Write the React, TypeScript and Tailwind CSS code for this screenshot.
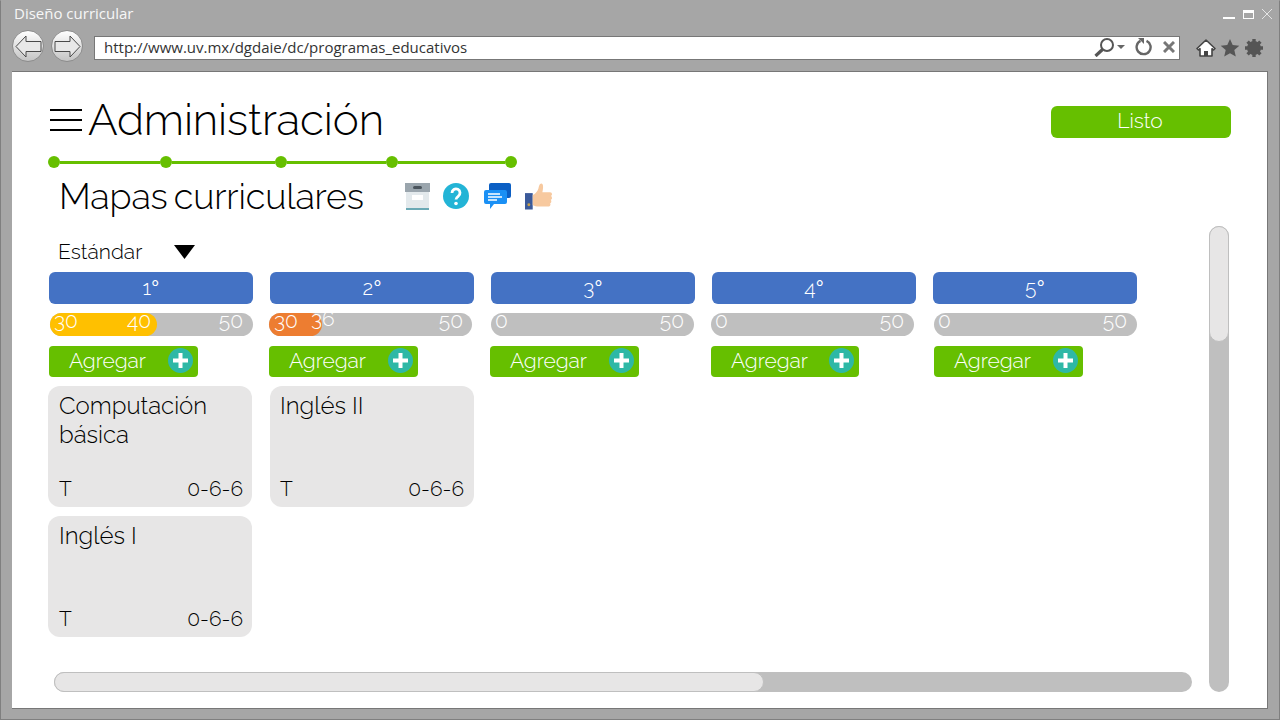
import React from 'react'

const NavArrow = ({ flip }: { flip?: boolean }) => (
  <div className="flex h-8 w-8 items-center justify-center rounded-full border border-[#8c8c8c] bg-gradient-to-b from-white to-[#c4c4c4]">
    <svg width="27" height="23" viewBox="0 0 27 23" className={flip ? 'rotate-180' : ''}>
      <path d="M1 11.500 11 1V6.500H26V16.500H11V22Z" fill="#e8e8e8" stroke="#4a4a4a" strokeWidth="1" />
    </svg>
  </div>
)

const Plus = () => (
  <div className="flex h-[25px] w-[25px] items-center justify-center rounded-full bg-[#2eb8a6]">
    <svg width="15" height="15" viewBox="0 0 15 15">
      <path d="M5.500 0h4v5.500H15v4H9.500V15h-4V9.500H0v-4h5.500z" fill="#fff" />
    </svg>
  </div>
)

type Semester = {
  num: string
  bar: string
  add: string
  addW: string
  card: string
  pad: string
  fill?: string
  labels: { text: string; cls: string }[]
  courses: string[][]
}

const semesters: Semester[] = [
  {
    num: '1',
    bar: 'ml-px',
    add: 'ml-0',
    addW: 'w-[149px]',
    card: '-ml-px',
    pad: 'pl-[11px] pr-[9px]',
    fill: 'w-[107px] bg-[#ffc000]',
    labels: [
      { text: '30', cls: 'left-[4px] top-[-4px]' },
      { text: '40', cls: 'left-[77px] top-[-4px]' },
      { text: '50', cls: 'right-[10px] top-[-4px]' },
    ],
    courses: [['Computación', 'básica'], ['Inglés I']],
  },
  {
    num: '2',
    bar: '-ml-px',
    add: '-ml-px',
    addW: 'w-[149px]',
    card: 'ml-0',
    pad: 'px-[10px]',
    fill: 'w-[53px] bg-[#ed7d31]',
    labels: [
      { text: '30', cls: 'left-[5px] top-[-4px]' },
      { text: '36', cls: 'left-[42px] top-[-6px]' },
      { text: '50', cls: 'right-[9px] top-[-4px]' },
    ],
    courses: [['Inglés II']],
  },
  {
    num: '3',
    bar: 'ml-0',
    add: '-ml-px',
    addW: 'w-[149px]',
    card: 'ml-0',
    pad: 'px-[10px]',
    labels: [
      { text: '0', cls: 'left-[4px] top-[-4px]' },
      { text: '50', cls: 'right-[10px] top-[-4px]' },
    ],
    courses: [],
  },
  {
    num: '4',
    bar: '-ml-px',
    add: '-ml-px',
    addW: 'w-[148px]',
    card: 'ml-0',
    pad: 'px-[10px]',
    labels: [
      { text: '0', cls: 'left-[4px] top-[-4px]' },
      { text: '50', cls: 'right-[10px] top-[-4px]' },
    ],
    courses: [],
  },
  {
    num: '5',
    bar: 'ml-px',
    add: 'ml-px',
    addW: 'w-[149px]',
    card: 'ml-0',
    pad: 'px-[10px]',
    labels: [
      { text: '0', cls: 'left-[4px] top-[-4px]' },
      { text: '50', cls: 'right-[10px] top-[-4px]' },
    ],
    courses: [],
  },
]

const Column = ({ s }: { s: Semester }) => (
  <div className="flex w-[204px] shrink-0 flex-col">
    <div className="flex h-8 w-[204px] items-center justify-center rounded-md bg-[#4472c4] text-[21px] text-white">
      {s.num}
      <span className="font-['Liberation_Sans',sans-serif] font-normal">°</span>
    </div>
    <div className={`relative mt-[9px] h-[23px] w-[203px] rounded-full bg-[#bfbfbf] text-[21px] text-white ${s.bar}`}>
      {s.fill && <div className={`absolute inset-y-0 left-0 rounded-full ${s.fill}`} />}
      {s.labels.map((l) => (
        <span key={l.text} className={`absolute leading-6 ${l.cls}`}>{l.text}</span>
      ))}
    </div>
    <div className={`mt-[10px] flex h-[31px] items-center justify-between rounded-[4px] bg-[#66bf00] pb-[2px] pl-5 pr-[5px] text-[21px] text-white ${s.addW} ${s.add}`}>
      <span>Agregar</span>
      <Plus />
    </div>
    <div className={`mt-[9px] flex flex-col gap-[9px] ${s.card}`}>
      {s.courses.map((c) => (
        <div key={c[0]} className={`flex h-[121px] w-[204px] flex-col rounded-xl bg-[#e7e6e6] pb-[3px] pt-[5px] text-black ${s.pad}`}>
          <div className="text-2xl leading-[29px]">
            {c.map((n) => <div key={n}>{n}</div>)}
          </div>
          <div className="mt-auto flex justify-between text-[21px]">
            <span>T</span>
            <span>0-6-6</span>
          </div>
        </div>
      ))}
    </div>
  </div>
)

export default function App() {
  return (
    <div className="flex h-[720px] w-[1280px] flex-col overflow-hidden border border-[#7f7f7f] border-t-[#a6a6a6] bg-[#a6a6a6] font-['Raleway','Lato',sans-serif] font-light oldstyle-nums">
      {/* browser chrome */}
      <div className="flex h-[26px] shrink-0 items-center justify-between pb-[2px] pl-[13px] pr-[7px] font-['Open_Sans',sans-serif] text-[15px] font-normal text-[#f7f7f7]">
        <span>Diseño curricular</span>
        <div className="mt-[2px] flex items-center gap-2">
          <div className="mt-[7px] h-[2px] w-3 bg-white" />
          <div className="h-[9px] w-[11px] border border-t-[3px] border-white" />
          <svg width="10" height="10" viewBox="0 0 10 10"><path d="M0 0l10 10M10 0 0 10" stroke="#e4e4e4" /></svg>
        </div>
      </div>
      <div className="flex h-[38px] shrink-0 items-center pl-[11px]">
        <NavArrow />
        <div className="ml-[7px]"><NavArrow flip /></div>
        <div className="ml-[11px] mt-[3px] flex h-6 w-[1086px] items-center justify-between border border-[#777] bg-white pb-px pl-[9px] pr-[4px] font-['Open_Sans',sans-serif] text-[15px] font-normal text-[#333]">
          <span>http://www.uv.mx/dgdaie/dc/programas_educativos</span>
          <div className="flex items-center gap-[10px]">
            <svg width="31" height="19" viewBox="0 0 31 19">
              <circle cx="13" cy="7" r="6" fill="none" stroke="#555" strokeWidth="2" />
              <path d="M8.500 11.500 1.500 18" stroke="#555" strokeWidth="3.200" />
              <path d="M23 7h8l-4 4z" fill="#666" />
            </svg>
            <svg width="18" height="18" viewBox="0 0 18 18">
              <path d="M11.500 2.800A7 7 0 1 1 5.500 2.900" fill="none" stroke="#666" strokeWidth="2.400" />
              <path d="M3 0h6v6z" fill="#666" />
            </svg>
            <svg width="12" height="12" viewBox="0 0 12 12"><path d="M1 1l10 10M11 1 1 11" stroke="#777" strokeWidth="3" /></svg>
          </div>
        </div>
        <div className="ml-[16px] mt-[3px] flex items-center gap-[4px]">
          <svg width="20" height="20" viewBox="0 0 20 20">
            <path d="M10 2 1 10.500l1.500 1.500L4 10.700V18h12v-7.300l1.500 1.300 1.500-1.500z" fill="#fff" stroke="#444" strokeWidth="1.600" strokeLinejoin="round" />
            <path d="M8 18v-5h4v5z" fill="#444" />
          </svg>
          <svg width="20" height="20" viewBox="0 0 20 20">
            <path d="M10 1l2.700 6.100 6.600.6-5 4.400 1.500 6.500L10 15.200l-5.800 3.400 1.500-6.500-5-4.400 6.600-.6z" fill="#555" />
          </svg>
          <svg width="20" height="20" viewBox="0 0 20 20">
            <circle cx="10" cy="10" r="5" fill="none" stroke="#555" strokeWidth="4" />
            <path d="M10 1v18M1 10h18M3.600 3.600l12.800 12.800M16.400 3.600 3.600 16.400" stroke="#555" strokeWidth="3.400" />
          </svg>
        </div>
      </div>

      {/* page */}
      <div className="mb-[10px] ml-[11px] mr-[11px] mt-[6px] flex min-h-0 flex-1 flex-col border-b border-r border-t border-[#777] bg-white">
        <div className="flex shrink-0 items-start justify-between pl-[38px] pr-[36px] pt-[21px]">
          <div className="flex items-center gap-[6px]">
            <div className="flex w-[32px] flex-col gap-2">
              <div className="h-[2px] bg-black" />
              <div className="h-[2px] bg-black" />
              <div className="h-[2px] bg-black" />
            </div>
            <h1 className="text-[44px] font-light leading-[54px] tracking-[-0.15px] text-black">Administración</h1>
          </div>
          <div className="mt-[13px] flex h-8 w-[180px] items-center justify-center rounded-md bg-[#66bf00] pb-[3px] pr-[2px] text-[21px] text-white">Listo</div>
        </div>

        <div className="ml-[36px] mt-[9px] flex h-3 shrink-0 items-center">
          <div className="h-3 w-3 rounded-full bg-[#66bf00]" />
          <div className="h-[3px] w-[100px] bg-[#66bf00]" />
          <div className="h-3 w-3 rounded-full bg-[#66bf00]" />
          <div className="h-[3px] w-[103px] bg-[#66bf00]" />
          <div className="h-3 w-3 rounded-full bg-[#66bf00]" />
          <div className="h-[3px] w-[99px] bg-[#66bf00]" />
          <div className="h-3 w-3 rounded-full bg-[#66bf00]" />
          <div className="h-[3px] w-[107px] bg-[#66bf00]" />
          <div className="h-3 w-3 rounded-full bg-[#66bf00]" />
        </div>

        <div className="ml-[47px] mt-[5px] flex h-[46px] shrink-0 items-center">
          <h2 className="w-[345px] text-4xl font-light leading-[46px] tracking-[-0.15px] text-black [word-spacing:-3px]">Mapas curriculares</h2>
          <svg width="27" height="27" viewBox="0 0 27 27">
            <rect x="2" y="8" width="23" height="19" fill="#e3e9ec" />
            <rect x="1" y="0" width="25" height="9" fill="#9aa5ad" />
            <rect x="9" y="3" width="9" height="3" rx="1.500" fill="#4a545c" />
            <rect x="8" y="12" width="11" height="5" fill="#fff" />
            <rect x="2" y="25" width="23" height="2" fill="#6ba9b5" />
          </svg>
          <svg className="ml-[12px]" width="26" height="26" viewBox="0 0 26 26">
            <circle cx="13" cy="13" r="13" fill="#23b4d6" />
            <path d="M9 10a4 4 0 1 1 6.300 3.200c-1.400 1-2.300 1.600-2.300 3.300" fill="none" stroke="#fff" strokeWidth="2.800" />
            <circle cx="13" cy="20.500" r="1.800" fill="#fff" />
          </svg>
          <svg className="ml-[15px]" width="27" height="27" viewBox="0 0 27 27">
            <rect x="5" y="0" width="22" height="15" rx="2" fill="#0b5fc4" />
            <path d="M2 7h19a2 2 0 0 1 2 2v10a2 2 0 0 1-2 2H10l-4 5v-5H2a2 2 0 0 1-2-2V9a2 2 0 0 1 2-2z" fill="#1a90f5" />
            <path d="M4 11h12M4 14h14M4 17h9" stroke="#fff" strokeWidth="1.300" />
          </svg>
          <svg className="ml-[14px]" width="27" height="28" viewBox="0 0 28 28">
            <rect x="0" y="11" width="8" height="17" fill="#3b5a9a" />
            <circle cx="4" cy="23" r="1.500" fill="#c9a24a" />
            <path d="M8 13c3-1 5-4 6-7 .4-2 1-5 3-5s2 4 1.500 6.500L18 10h8a2 2 0 0 1 2 2c0 1-.5 1.500-1 2 .6.500 1 1.200 1 2 0 1-.6 1.600-1.300 2 .4.500.6 1 .6 1.600 0 1-.6 1.600-1.300 2 .3.400.4.800.4 1.200 0 1.200-1 2.200-2.400 2.200H14c-2 0-4-1-6-1.500z" fill="#f7c99f" />
          </svg>
        </div>

        <div className="ml-[36px] mr-[38px] mt-[7px] flex min-h-0 flex-1 pb-4">
          <div className="flex min-w-0 flex-1 flex-col">
            <div className="mt-[14px] flex h-6 shrink-0 items-center pl-[10px]">
              <span className="w-[116px] text-[21px] leading-6 text-black">Estándar</span>
              <svg className="-mt-px" width="21" height="14" viewBox="0 0 21 14"><path d="M0 0h21L10.500 14z" fill="#000" /></svg>
            </div>
            <div className="mt-2 flex gap-[17px] pl-px">
              {semesters.map((s) => <Column key={s.num} s={s} />)}
            </div>
            <div className="ml-[6px] mt-auto h-5 w-[1138px] shrink-0 rounded-full bg-[#bfbfbf]">
              <div className="h-5 w-[710px] rounded-full border border-[#bfbfbf] bg-[#e7e6e6]" />
            </div>
          </div>
          <div className="ml-[17px] h-[466px] w-5 shrink-0 rounded-full bg-[#bfbfbf]">
            <div className="h-[116px] w-5 rounded-full border border-[#bfbfbf] bg-[#e7e6e6]" />
          </div>
        </div>
      </div>
    </div>
  )
}
